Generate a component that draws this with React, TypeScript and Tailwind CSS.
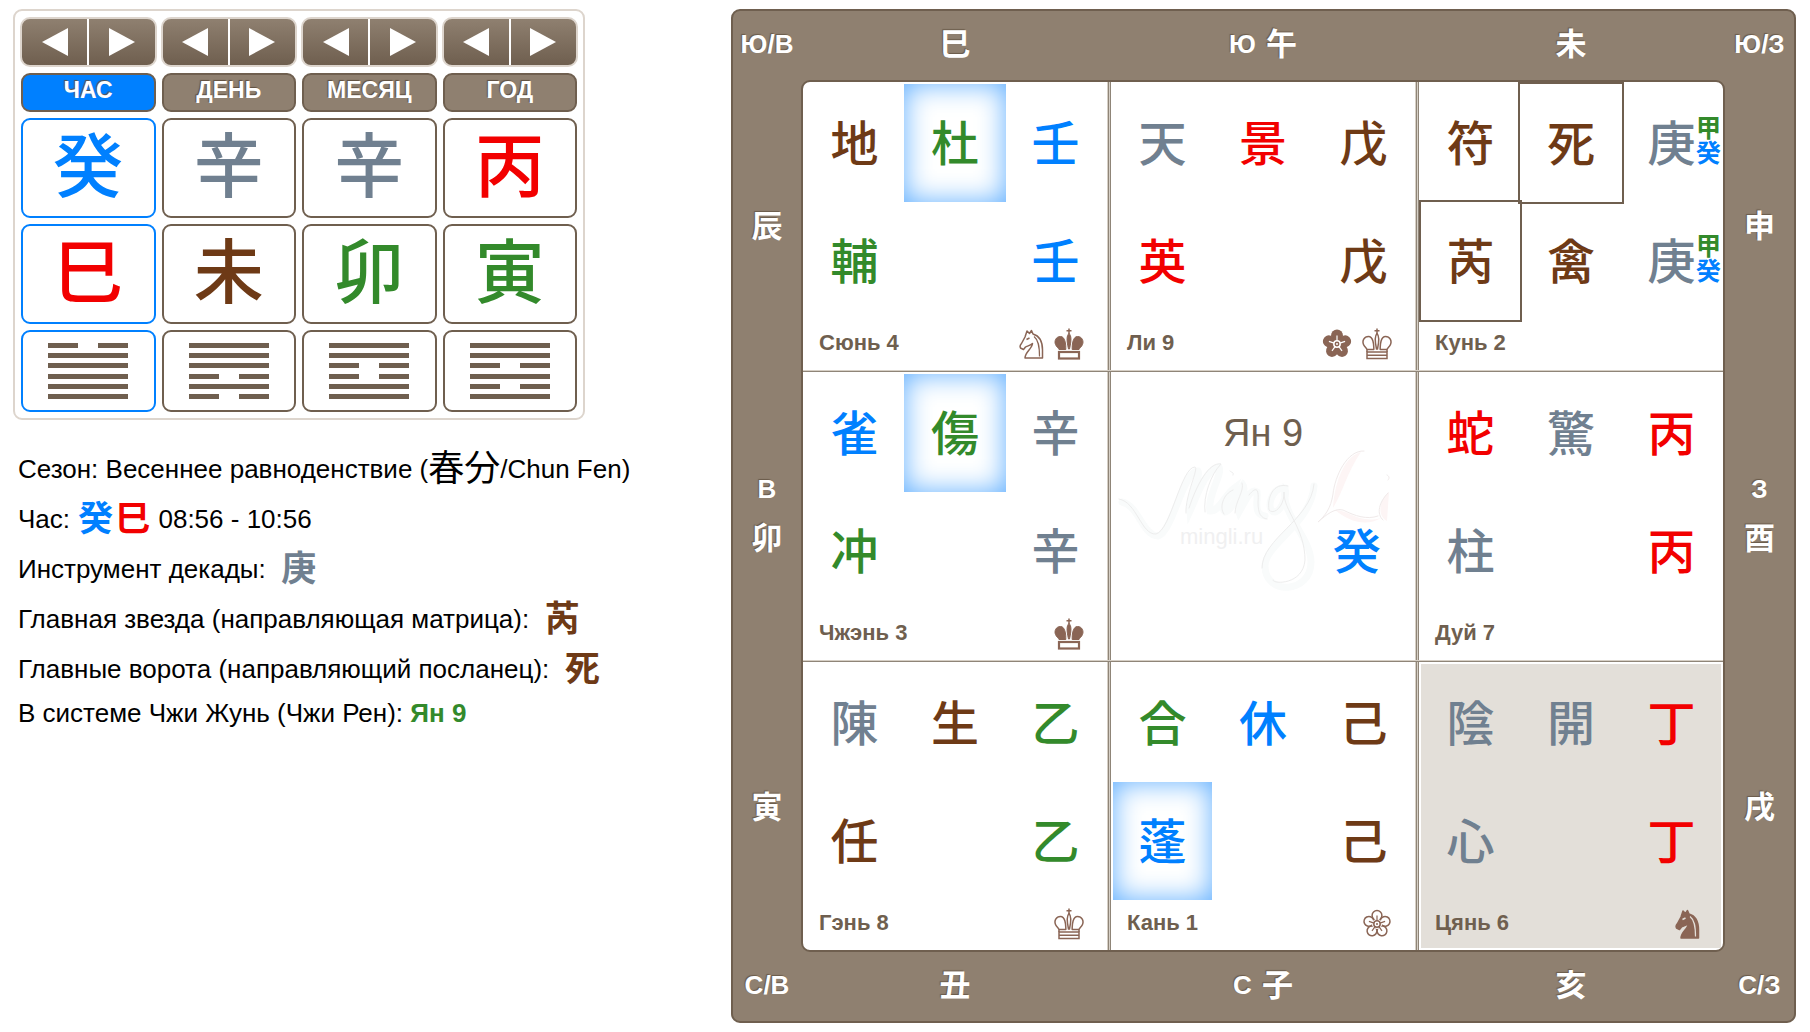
import React from "react";

type Tone = "water" | "metal" | "fire" | "earth" | "wood";
type Mark = "glow" | "frame";
type IconName = "knight" | "knightSolid" | "king" | "kingSolid" | "flower" | "flowerSolid";

const TONES: Record<Tone, string> = {
  water: "text-[#0080ff]",
  metal: "text-[#708090]",
  fire: "text-[#f20000]",
  earth: "text-[#6e3a16]",
  wood: "text-[#338a2b]",
};

const CJK = "font-['Noto_Sans_CJK_JP','Noto_Sans_CJK_TC',sans-serif]";

/* ---------- pillars ---------- */

interface Pillar {
  name: string;
  stem: [string, Tone];
  branch: [string, Tone];
  lines: string; // top to bottom, 1 = whole line, 0 = broken line
  active?: boolean;
}

const PILLARS: Pillar[] = [
  { name: "ЧАС", stem: ["癸", "water"], branch: ["巳", "fire"], lines: "011111", active: true },
  { name: "ДЕНЬ", stem: ["辛", "metal"], branch: ["未", "earth"], lines: "111010" },
  { name: "МЕСЯЦ", stem: ["辛", "metal"], branch: ["卯", "wood"], lines: "110011" },
  { name: "ГОД", stem: ["丙", "fire"], branch: ["寅", "wood"], lines: "110101" },
];

function Arrow({ dir }: { dir: "left" | "right" }) {
  return (
    <svg viewBox="0 0 26 28" className="h-7 w-[26px]" fill="#fff" aria-hidden="true">
      <path d={dir === "left" ? "M26 0V28L0 14Z" : "M0 0V28L26 14Z"} />
    </svg>
  );
}

function Hexagram({ lines }: { lines: string }) {
  return (
    <div className="flex h-[57px] w-20 flex-col justify-between">
      {lines.split("").map((l, i) =>
        l === "1" ? (
          <div key={i} className="h-[5px] bg-[#6f5f4f]" />
        ) : (
          <div key={i} className="flex h-[5px] justify-between">
            <div className="w-[30px] bg-[#6f5f4f]" />
            <div className="w-[30px] bg-[#6f5f4f]" />
          </div>
        ),
      )}
    </div>
  );
}

function PillarColumn({ pillar }: { pillar: Pillar }) {
  const edge = pillar.active ? "border-[#0080ff]" : "border-[#6f5f4f]";
  return (
    <div className="flex flex-col gap-1.5">
      <div className="flex h-[50px] divide-x-2 divide-white overflow-hidden rounded-[10px] border-2 border-[#ddd5cd] bg-linear-to-b from-[#8f8070] to-[#6f5f4f]">
        <button type="button" aria-label={`${pillar.name} назад`} className="flex flex-1 items-center justify-center">
          <Arrow dir="left" />
        </button>
        <button type="button" aria-label={`${pillar.name} вперёд`} className="flex flex-1 items-center justify-center">
          <Arrow dir="right" />
        </button>
      </div>
      <div
        className={`mx-px flex h-[39px] items-center justify-center rounded-[9px] border-2 border-[#6f5f4f] pb-1 text-[23px] leading-none font-bold text-white [text-shadow:-1px_-1px_1px_#5f4f40] ${pillar.active ? "bg-[#0080ff]" : "bg-[#8f8070]"}`}
      >
        {pillar.name}
      </div>
      {[pillar.stem, pillar.branch].map(([char, tone], i) => (
        <div
          key={i}
          className={`mx-px flex h-[100px] items-center justify-center rounded-[9px] border-2 bg-white pb-3 text-[70px] leading-none font-medium ${CJK} ${TONES[tone]} ${edge}`}
        >
          {char}
        </div>
      ))}
      <div className={`mx-px flex h-[82px] items-center justify-center rounded-[9px] border-2 bg-white ${edge}`}>
        <Hexagram lines={pillar.lines} />
      </div>
    </div>
  );
}

/* ---------- information lines ---------- */

function Glyph({ char, tone }: { char: string; tone: Tone }) {
  return (
    <span className={`inline-block w-[37px] text-center align-[-3px] text-[35px] leading-none font-bold ${CJK} ${TONES[tone]}`}>
      {char}
    </span>
  );
}

function Info() {
  return (
    <div className="mt-6 flex flex-col pl-[5px] text-[26px] whitespace-nowrap text-black *:h-[50px] *:leading-[50px]">
      <p>
        Сезон: Весеннее равноденствие (<span className={`align-[-3px] text-[36px] leading-none ${CJK}`}>春分</span>/Chun Fen)
      </p>
      <p>
        Час: <Glyph char="癸" tone="water" />
        <Glyph char="巳" tone="fire" /> 08:56 - 10:56
      </p>
      <p>
        Инструмент декады: &nbsp;
        <Glyph char="庚" tone="metal" />
      </p>
      <p>
        Главная звезда (направляющая матрица): &nbsp;
        <Glyph char="芮" tone="earth" />
      </p>
      <p>
        Главные ворота (направляющий посланец): &nbsp;
        <Glyph char="死" tone="earth" />
      </p>
      <p className="-mt-1.5">
        В системе Чжи Жунь (Чжи Рен): <b className="text-[#338a2b]">Ян 9</b>
      </p>
    </div>
  );
}

/* ---------- palace icons ---------- */

const TURNS = [0, 72, 144, 216, 288];

function Icon({ name }: { name: IconName }) {
  const color = "#8a6555";
  if (name === "knight" || name === "knightSolid") {
    const solid = name === "knightSolid";
    return (
      <svg viewBox="0 0 25 32" className="h-8 w-[25px]" aria-hidden="true">
        <path
          d="M6 30C6 24 13 21 13.5 15.5C11 18 8 18 6.500 19L4.500 21.500L1.500 20C.5 18 1 17 2.500 15.500L6 9L7 6L8 3L10.500 5.500L12.500 2.500L14 6C21 8 23.500 15 23.500 22V30Z"
          fill={solid ? color : "none"}
          stroke={color}
          strokeWidth="1.500"
          strokeLinejoin="round"
        />
        <path d="M15 8.500C19.500 12 20.500 18 20.500 28.500" fill="none" stroke={solid ? "#e3dfd9" : color} strokeWidth="1.200" />
        <path d="M7.500 11.500L10.500 10" stroke={solid ? "#e3dfd9" : color} strokeWidth="1.500" />
      </svg>
    );
  }
  if (name === "king" || name === "kingSolid") {
    const solid = name === "kingSolid";
    return (
      <svg viewBox="0 0 30 32" className="h-8 w-[30px]" aria-hidden="true">
        <g fill={solid ? color : "none"} stroke={color} strokeWidth={solid ? 1 : 1.5} strokeLinejoin="round">
          <path d="M15 .5V6M12.500 2.800H17.500" strokeWidth="1.500" />
          <path d="M15 5.500C17.500 8 17.500 12 15.500 21H14.500C12.500 12 12.500 8 15 5.500Z" />
          <path d="M11.800 21.500C12 16 11 8.500 6.500 8.500C2 8.500 0 13 1.500 16.500C2.500 19 4.500 20 5 21.500Z" />
          <path d="M18.200 21.500C18 16 19 8.500 23.500 8.500C28 8.500 30 13 28.500 16.500C27.500 19 25.500 20 25 21.500Z" />
        </g>
        <rect x="5" y="24" width="20" height="6.500" fill="none" stroke={color} strokeWidth={solid ? 2.2 : 1.5} />
        {!solid && <path d="M5 27.200H25M5 24V21.500M25 24V21.500" stroke={color} strokeWidth="1.500" />}
      </svg>
    );
  }
  const solid = name === "flowerSolid";
  const line = solid ? "#fff" : color;
  return (
    <svg viewBox="0 0 30 32" className="h-8 w-[30px]" aria-hidden="true">
      {TURNS.map((a) => (
        <circle
          key={a}
          cx="15"
          cy="7.500"
          r={solid ? 6 : 4.9}
          fill={solid ? color : "#fff"}
          stroke={color}
          strokeWidth={solid ? 0 : 1.5}
          transform={`rotate(${a} 15 16)`}
        />
      ))}
      <circle cx="15" cy="16" r={solid ? 7 : 5} fill={solid ? color : "#fff"} />
      {TURNS.map((a) => (
        <path key={a} d="M15 7.500V13" stroke={line} strokeWidth="1.200" transform={`rotate(${a} 15 16)`} />
      ))}
      <circle cx="15" cy="16" r="3.200" fill={solid ? color : "none"} stroke={line} strokeWidth="1.500" />
      <circle cx="15" cy="16" r="1" fill={line} />
    </svg>
  );
}

/* ---------- palaces ---------- */

interface Cell {
  char: string;
  tone: Tone;
  mark?: Mark;
  hidden?: boolean;
}

interface Palace {
  title: string;
  cells: (Cell | null)[];
  icons?: IconName[];
  shaded?: boolean;
  center?: boolean;
}

const c = (char: string, tone: Tone, mark?: Mark): Cell => ({ char, tone, mark });
const withHidden = (cell: Cell): Cell => ({ ...cell, hidden: true });

const ROWS: Palace[][] = [
  [
    {
      title: "Сюнь 4",
      cells: [c("地", "earth"), c("杜", "wood", "glow"), c("壬", "water"), c("輔", "wood"), null, c("壬", "water")],
      icons: ["knight", "kingSolid"],
    },
    {
      title: "Ли 9",
      cells: [c("天", "metal"), c("景", "fire"), c("戊", "earth"), c("英", "fire"), null, c("戊", "earth")],
      icons: ["flowerSolid", "king"],
    },
    {
      title: "Кунь 2",
      cells: [
        c("符", "earth"),
        c("死", "earth", "frame"),
        withHidden(c("庚", "metal")),
        c("芮", "earth", "frame"),
        c("禽", "earth"),
        withHidden(c("庚", "metal")),
      ],
    },
  ],
  [
    {
      title: "Чжэнь 3",
      cells: [c("雀", "water"), c("傷", "wood", "glow"), c("辛", "metal"), c("冲", "wood"), null, c("辛", "metal")],
      icons: ["kingSolid"],
    },
    { title: "Ян 9", cells: [c("癸", "water")], center: true },
    {
      title: "Дуй 7",
      cells: [c("蛇", "fire"), c("驚", "metal"), c("丙", "fire"), c("柱", "metal"), null, c("丙", "fire")],
    },
  ],
  [
    {
      title: "Гэнь 8",
      cells: [c("陳", "metal"), c("生", "earth"), c("乙", "wood"), c("任", "earth"), null, c("乙", "wood")],
      icons: ["king"],
    },
    {
      title: "Кань 1",
      cells: [c("合", "wood"), c("休", "water"), c("己", "earth"), c("蓬", "water", "glow"), null, c("己", "earth")],
      icons: ["flower"],
    },
    {
      title: "Цянь 6",
      cells: [c("陰", "metal"), c("開", "metal"), c("丁", "fire"), c("心", "metal"), null, c("丁", "fire")],
      icons: ["knightSolid"],
      shaded: true,
    },
  ],
];

const MARKS: Record<Mark, string> = {
  glow: "shadow-[inset_0_0_28px_#5cadff]",
  frame: "outline-2 outline-[#6f5f4f]",
};

function PalaceCell({ cell }: { cell: Cell | null }) {
  if (!cell) return <div />;
  return (
    <div
      className={`relative flex items-center justify-center pb-1.5 text-5xl leading-none font-medium ${CJK} ${TONES[cell.tone]} ${cell.mark ? MARKS[cell.mark] : ""}`}
    >
      {cell.char}
      {cell.hidden && (
        <span className="absolute right-0 bottom-[38px] flex flex-col text-[25px] leading-[25px] font-bold">
          <span className={TONES.wood}>甲</span>
          <span className={TONES.water}>癸</span>
        </span>
      )}
    </div>
  );
}

function Watermark() {
  return (
    <svg viewBox="0 0 300 160" className="absolute top-[68px] left-0.5 h-40 w-[300px]" fill="none" strokeLinecap="round" aria-hidden="true">
      <g stroke="#f9fbfb" strokeWidth="7">
        <path d="M9 62C26 66 30 96 45 96C60 92 70 30 85 31C88 36 76 58 77 71C84 56 92 30 106 27C110 34 94 56 97 71C106 72 112 55 120 49C116 58 107 68 112 72C120 70 124 54 130 45C134 50 124 66 126 72C134 58 138 48 144 52C145 62 140 74 152 76" />
        <path d="M172 48C158 46 152 72 162 72C170 70 174 52 172 50C168 74 198 98 198 122C198 154 152 156 152 126C152 104 198 84 201 46" />
      </g>
      <g stroke="#ededed" strokeWidth="1">
        <path d="M6 59C24 62 28 95 43 94C58 90 68 27 82 27C86 28 72 56 73 73" />
        <path d="M92 72C90 56 98 34 108 24C96 22 84 44 76 68M120 50C110 54 106 68 111 74M117 31C119 33 121 32 120 35M122 73C122 62 132 50 129 43M136 55C144 45 146 50 145 62C145 74 148 78 154 79" />
        <path d="M175 46C160 42 154 58 156 70C162 76 172 64 171 52C170 70 192 88 192 120C190 146 158 144 160 140M201 44C198 80 149 98 149 128" />
      </g>
      <g>
        <path d="M248 12C232 16 222 40 220 68C230 52 234 32 248 12ZM222 70C236 70 246 84 268 78C252 88 234 80 222 70ZM276 52C266 60 264 76 274 81Z" fill="#fdf5f5" />
        <path
          d="M251 11C234 10 222 36 220 54C218 68 212 76 205 82C214 74 222 68 230 70C242 76 254 80 265 76M275 53C266 62 263 74 270 80M274 35C276 36 277 38 275 40"
          stroke="#f0eaea"
          strokeWidth="1"
        />
      </g>
      <text x="67" y="104" fontSize="22" fill="#f0f0f1" fontFamily="Liberation Sans, sans-serif">
        mingli.ru
      </text>
    </svg>
  );
}

function PalaceBox({ palace }: { palace: Palace }) {
  if (palace.center) {
    return (
      <section className="relative grid h-72 min-w-0 flex-1 grid-rows-[118px_118px_1fr] p-0.5">
        <Watermark />
        <h2 className="relative flex items-center justify-center text-[38px] leading-none text-[#6f5f4f]">{palace.title}</h2>
        <div className="relative grid justify-end pr-8">
          <PalaceCell cell={palace.cells[0]} />
        </div>
      </section>
    );
  }
  return (
    <section className="flex h-72 min-w-0 flex-1 p-0.5">
      <div className={`grid flex-1 grid-cols-[99fr_102fr_99fr] grid-rows-[118px_118px_1fr] ${palace.shaded ? "bg-[#e3dfd9]" : ""}`}>
        {palace.cells.map((cell, i) => (
          <PalaceCell key={i} cell={cell} />
        ))}
        <div className="col-span-3 flex items-center justify-between pr-[21px] pl-3.5">
          <h2 className="pb-0.5 text-[22px] leading-none font-bold text-[#6f5f4f]">{palace.title}</h2>
          <div className="flex items-center gap-2.5">
            {palace.icons?.map((name) => (
              <Icon key={name} name={name} />
            ))}
          </div>
        </div>
      </div>
    </section>
  );
}

function Separator() {
  return (
    <div className="w-1 bg-[linear-gradient(90deg,#d6cfc5_0_1px,#8f8578_1px_2px,#d6cfc5_2px_3px,#8f8578_3px_4px)]" />
  );
}

/* ---------- board frame ---------- */

function Side({ children }: { children: string }) {
  return <span className="text-[26px] leading-none">{children}</span>;
}

function Branch({ children }: { children: string }) {
  return <span className={`block pb-1 text-[31px] leading-none ${CJK}`}>{children}</span>;
}

function Edge({ corners, branches, side }: { corners: [string, string]; branches: [string, string, string]; side: string }) {
  return (
    <div className="grid h-[69px] grid-cols-[68px_1fr_1fr_1fr_69px] items-center justify-items-center pb-1">
      <Side>{corners[0]}</Side>
      <Branch>{branches[0]}</Branch>
      <div className="flex items-center gap-2.5">
        <Side>{side}</Side>
        <Branch>{branches[1]}</Branch>
      </div>
      <Branch>{branches[2]}</Branch>
      <Side>{corners[1]}</Side>
    </div>
  );
}

function Flank({ branches, side }: { branches: [string, string, string]; side: string }) {
  return (
    <div className="grid grid-rows-3 items-center justify-items-center">
      <Branch>{branches[0]}</Branch>
      <div className="flex flex-col items-center gap-[18px]">
        <Side>{side}</Side>
        <Branch>{branches[1]}</Branch>
      </div>
      <Branch>{branches[2]}</Branch>
    </div>
  );
}

function Board() {
  return (
    <main className="min-w-0 flex-1 rounded-[9px] border-2 border-[#6f5f4f] bg-[#8f8070] font-bold text-white [text-shadow:-1px_-1px_1px_#6a5a4a]">
      <Edge corners={["Ю/В", "Ю/З"]} branches={["巳", "午", "未"]} side="Ю" />
      <div className="grid grid-cols-[68px_1fr_69px]">
        <Flank branches={["辰", "卯", "寅"]} side="В" />
        <div className="min-w-0 rounded-[9px] border-2 border-[#6f5f4f] bg-white font-normal [text-shadow:none]">
          {ROWS.map((row, r) => (
            <React.Fragment key={r}>
              {r > 0 && <div className="h-0.5 bg-[linear-gradient(#d6cfc5_0_1px,#8f8578_1px_2px)]" />}
              <div className="flex">
                {row.map((palace, i) => (
                  <React.Fragment key={palace.title}>
                    {i > 0 && <Separator />}
                    <PalaceBox palace={palace} />
                  </React.Fragment>
                ))}
              </div>
            </React.Fragment>
          ))}
        </div>
        <Flank branches={["申", "酉", "戌"]} side="З" />
      </div>
      <Edge corners={["С/В", "С/З"]} branches={["丑", "子", "亥"]} side="С" />
    </main>
  );
}

export default function App() {
  return (
    <div className="flex items-start justify-between gap-6 bg-white pt-[9px] pr-3.5 pb-2.5 pl-[13px] font-['Liberation_Sans',Arial,'Noto_Sans_CJK_JP',sans-serif]">
      <aside className="w-[694px] shrink-0">
        <div className="grid w-[572px] grid-cols-4 gap-1 rounded-[9px] border-2 border-[#ddd5cd] px-[5px] py-1.5">
          {PILLARS.map((p) => (
            <PillarColumn key={p.name} pillar={p} />
          ))}
        </div>
        <Info />
      </aside>
      <Board />
    </div>
  );
}
